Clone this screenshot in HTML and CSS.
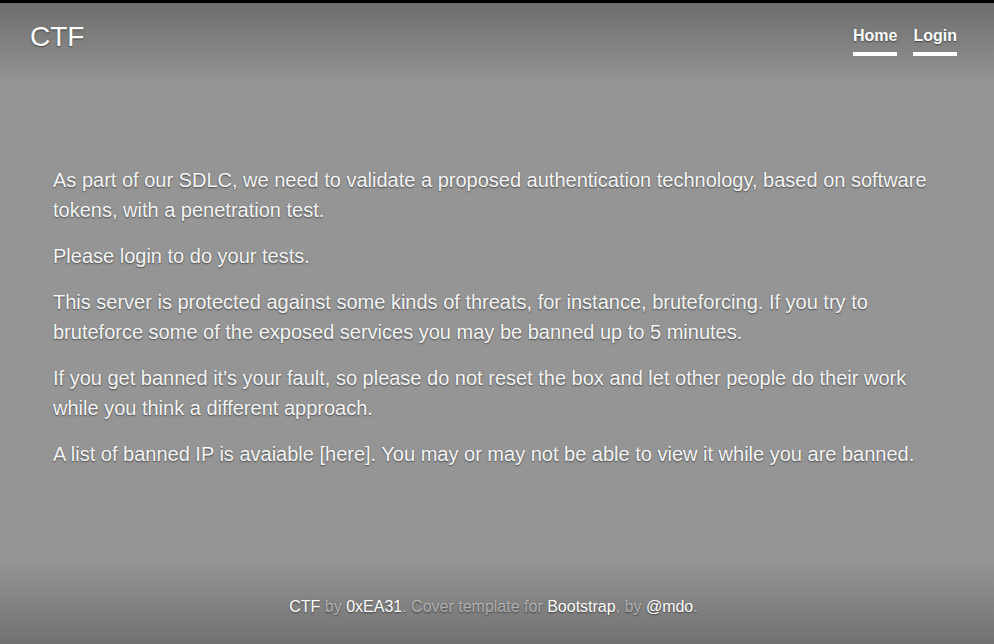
FILE: index.html
```html
<!DOCTYPE html>
<html lang="en">
<head>
<meta charset="utf-8">
<title>CTF</title>
<link rel="stylesheet" href="styles.css">
</head>
<body>
<div class="cover">
  <header class="masthead">
    <h3 class="brand">CTF</h3>
    <nav class="nav">
      <a class="nav-link" href="#">Home</a>
      <a class="nav-link" href="#">Login</a>
    </nav>
  </header>
  <main class="inner">
    <p class="lead">As part of our SDLC, we need to validate a proposed authentication technology, based on software tokens, with a penetration test.</p>
    <p class="lead">Please login to do your tests.</p>
    <p class="lead">This server is protected against some kinds of threats, for instance, bruteforcing. If you try to bruteforce some of the exposed services you may be banned up to 5 minutes.</p>
    <p class="lead">If you get banned it's your fault, so please do not reset the box and let other people do their work while you think a different approach.</p>
    <p class="lead">A list of banned IP is avaiable [here]. You may or may not be able to view it while you are banned.</p>
  </main>
  <footer class="mastfoot">
    <p><a href="#">CTF</a> by <a href="#">0xEA31</a>. Cover template for <a href="#">Bootstrap</a>, by <a href="#">@mdo</a>.</p>
  </footer>
</div>
</body>
</html>
```
FILE: styles.css
```css
html, body {
  height: 100%;
}
body {
  margin: 0;
  font-family: "Liberation Sans", Arial, sans-serif;
  font-size: 16px;
  line-height: 1.5;
  color: #fff;
  text-shadow: 0 0.05rem 0.1rem rgba(0, 0, 0, 0.5);
  background-color: #959595;
  background-image:
    linear-gradient(to bottom, rgba(0,0,0,0.28) 0, rgba(0,0,0,0) 85px),
    linear-gradient(to top, rgba(0,0,0,0.24) 0, rgba(0,0,0,0) 85px);
  border-top: 3px solid #000;
  box-sizing: border-box;
}
.cover {
  height: 100%;
  display: flex;
  flex-direction: column;
}
.masthead {
  display: flex;
  justify-content: space-between;
  align-items: flex-start;
  padding: 17px 37px 0 30px;
}
.brand {
  margin: 0;
  font-size: 28px;
  font-weight: 500;
  line-height: 1.2;
}
.nav {
  display: flex;
  gap: 16px;
}
.nav-link {
  color: #fff;
  font-weight: 700;
  text-decoration: none;
  padding: 4px 0;
  border-bottom: 4px solid #fff;
}
.inner {
  margin: auto 0;
  padding: 0 53px 2px;
}
.lead {
  font-size: 20px;
  line-height: 30px;
  margin: 0 0 16px;
  color: rgba(255, 255, 255, 0.95);
}
.mastfoot {
  text-align: center;
  color: rgba(255, 255, 255, 0.5);
  padding: 0 37px 25px 30px;
}
.mastfoot p {
  margin: 0;
}
.mastfoot a {
  color: #fff;
  text-decoration: none;
}
```
